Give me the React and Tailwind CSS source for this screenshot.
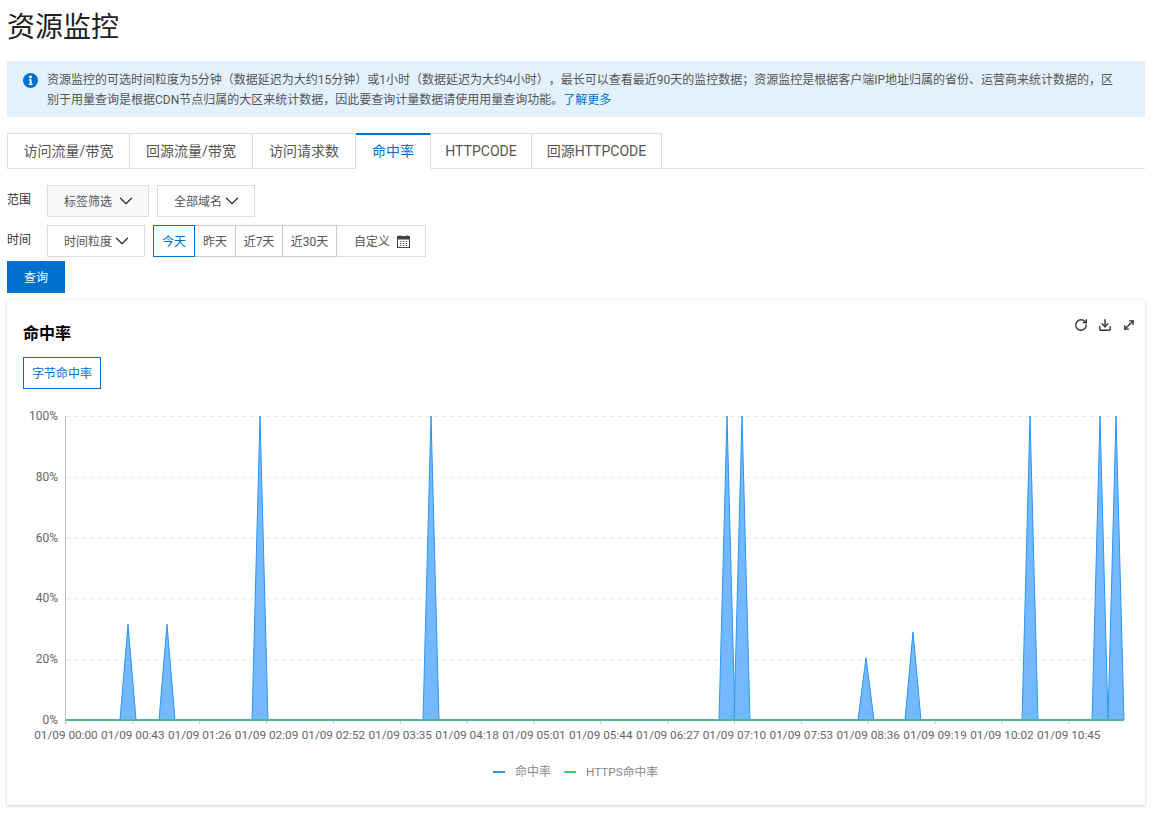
import React from 'react';
import { ChevronDown, RotateCw, Download, MoveDiagonal } from 'lucide-react';

const tabs = ['访问流量/带宽', '回源流量/带宽', '访问请求数', '命中率', 'HTTPCODE', '回源HTTPCODE'];
const tabWidths = ['w-[123px]', 'w-[123px]', 'w-[103px]', 'w-[75px]', 'w-[101px]', 'w-[130px]'];
const ranges = [
  { label: '今天', width: 'w-[42px]' },
  { label: '昨天', width: 'w-[41px]' },
  { label: '近7天', width: 'w-[47px]' },
  { label: '近30天', width: 'w-[54px]' },
];
const xLabels = ['00:00', '00:43', '01:26', '02:09', '02:52', '03:35', '04:18', '05:01', '05:44', '06:27', '07:10', '07:53', '08:36', '09:19', '10:02', '10:45'];
const yLabels = [100, 80, 60, 40, 20, 0];
const peaks = [
  [128, 31.5], [167, 31.5], [260, 100], [431, 100], [727, 100], [742, 100],
  [866, 20.5], [913, 29], [1030, 100], [1100, 100], [1116, 100],
];

function Chart() {
  const top = 16;
  const bottom = 320;
  const yOf = (v) => bottom - (v / 100) * (bottom - top);
  return (
    <svg width="1138" height="400" viewBox="7 400 1138 400" className="block">
      <g transform="translate(0 400)">
        {yLabels.map((v) => (
          <g key={v}>
            {v > 0 && <line x1="66" x2="1124" y1={yOf(v) + 0.5} y2={yOf(v) + 0.5} stroke="#e8e8e8" strokeDasharray="4 4" />}
            <text x="58" y={yOf(v) + 4} textAnchor="end" fontSize="12" fill="#666">{v}%</text>
          </g>
        ))}
        <line x1="65.5" x2="65.5" y1={top} y2={bottom + 4} stroke="#c4c4c4" />
        {xLabels.map((t, i) => {
          const x = 66 + i * 66.85;
          return (
            <g key={t}>
              <line x1={x} x2={x} y1={bottom} y2={bottom + 4} stroke="#c4c4c4" />
              <text x={x} y={bottom + 19} textAnchor="middle" fontSize="11.75" fill="#666">01/09 {t}</text>
            </g>
          );
        })}
        {peaks.map(([x, v]) => (
          <path key={x} d={`M${x - 8} ${bottom}L${x} ${yOf(v)}L${x + 8} ${bottom}Z`} fill="#74b9ff" stroke="#2b95f5" strokeWidth="1" />
        ))}
        <line x1="66" x2="1124" y1={bottom} y2={bottom} stroke="#4fb59b" strokeWidth="2" />
        <line x1="493" x2="505" y1="372" y2="372" stroke="#2b95f5" strokeWidth="2" />
        <text x="515" y="376" fontSize="12" fill="#888">命中率</text>
        <line x1="564" x2="576" y1="372" y2="372" stroke="#3fcf6f" strokeWidth="2" />
        <text x="586" y="376" fontSize="11.75" fill="#888">HTTPS命中率</text>
      </g>
    </svg>
  );
}

function InfoDot() {
  return (
    <svg width="15" height="15" viewBox="0 0 15 15" className="mt-[3px] shrink-0">
      <circle cx="7.5" cy="7.5" r="7.5" fill="#0070cc" />
      <circle cx="7.5" cy="4" r="1.4" fill="#fff" />
      <path d="M6 6.3h2.6v4.6h1v1.2H5.7v-1.2h1V7.5H6z" fill="#fff" />
    </svg>
  );
}

function CalendarIcon() {
  return (
    <svg width="13" height="13" viewBox="0 0 13 13" className="shrink-0">
      <rect x="0.5" y="1.5" width="12" height="11" fill="none" stroke="#444" />
      <rect x="0.5" y="1.5" width="12" height="3" fill="#444" />
      <path d="M3 0v2M10 0v2" stroke="#444" />
      <path d="M3 6.5h1.5M5.8 6.5h1.5M8.6 6.5h1.5M3 8.5h1.5M5.8 8.5h1.5M8.6 8.5h1.5M3 10.5h1.5M5.8 10.5h1.5M8.6 10.5h1.5" stroke="#666" />
    </svg>
  );
}

export default function App() {
  return (
    <div className="w-[1154px] h-[814px] overflow-hidden bg-white pl-[7px] pr-[9px] text-[#333] [text-spacing-trim:space-all]" style={{ fontFamily: 'Roboto, "Noto Sans CJK SC", sans-serif' }}>
      <h1 className="h-[61px] pt-[8px] text-[28px] leading-[40px] font-normal text-[#222]">资源监控</h1>

      <div className="flex h-[56px] bg-[#e3f1fd] pl-[16px] pr-[24px] pt-[9px]">
        <InfoDot />
        <div className="ml-[9px] text-[12px] leading-[20px] text-[#555]">
          <p>资源监控的可选时间粒度为5分钟（数据延迟为大约15分钟）或1小时（数据延迟为大约4小时），最长可以查看最近90天的监控数据；资源监控是根据客户端IP地址归属的省份、运营商来统计数据的，区</p>
          <div className="flex">
            <p>别于用量查询是根据CDN节点归属的大区来统计数据，因此要查询计量数据请使用用量查询功能。</p>
            <a className="text-[#0070cc]">了解更多</a>
          </div>
        </div>
      </div>

      <div className="mt-[16px] flex h-[36px] border-b border-[#ddd]">
        {tabs.map((t, i) => (
          <div
            key={t}
            className={`${tabWidths[i]} flex h-[36px] items-center justify-center border-r border-[#ddd] text-[14px] ${i === 0 ? 'border-l' : ''} ${i === 3 ? 'border-t-2 border-t-[#0070cc] border-b border-b-white bg-white text-[#0070cc]' : 'border-t text-[#555]'}`}
          >
            {t}
          </div>
        ))}
      </div>

      <div className="mt-[16px] flex h-[32px] items-start">
        <span className="w-[40px] pt-[5px] text-[12px] leading-[20px] text-[#333]">范围</span>
        <div className="flex h-[32px] w-[102px] items-center border border-[#ddd] bg-[#f7f7f7] pl-[16px] text-[12px] text-[#555]">
          <span className="pt-[2px]">标签筛选</span>
          <ChevronDown className="ml-[3px] h-[22px] w-[22px] text-[#333]" strokeWidth={1.4} />
        </div>
        <div className="ml-[8px] flex h-[32px] w-[98px] items-center border border-[#ddd] pl-[16px] text-[12px] text-[#555]">
          <span className="pt-[2px]">全部域名</span>
          <ChevronDown className="-ml-[1px] h-[22px] w-[22px] text-[#333]" strokeWidth={1.4} />
        </div>
      </div>

      <div className="mt-[8px] flex h-[32px] items-start">
        <span className="w-[40px] pt-[5px] text-[12px] leading-[20px] text-[#333]">时间</span>
        <div className="flex h-[32px] w-[98px] items-center border border-[#ddd] pl-[16px] text-[12px] text-[#555]">
          <span className="pt-[2px]">时间粒度</span>
          <ChevronDown className="-ml-[1px] h-[22px] w-[22px] text-[#333]" strokeWidth={1.4} />
        </div>
        <div className="ml-[8px] flex">
          {ranges.map((r, i) => (
            <div
              key={r.label}
              className={`${r.width} flex h-[32px] items-center justify-center border pt-[2px] text-[12px] ${i === 0 ? 'border-[#0070cc] text-[#0070cc]' : 'border-l-0 border-[#ccc] text-[#555]'}`}
            >
              {r.label}
            </div>
          ))}
          <div className="flex h-[32px] w-[89px] items-center border border-l-0 border-[#ddd] pl-[17px] text-[12px] text-[#555]">
            <span className="pt-[2px]">自定义</span>
            <span className="ml-[7px]"><CalendarIcon /></span>
          </div>
        </div>
      </div>

      <button className="mt-[4px] block h-[32px] w-[58px] bg-[#0070cc] pt-[2px] text-[12px] text-white">查询</button>

      <div className="mt-[7px] h-[505px] w-[1138px] overflow-hidden bg-white shadow-[0_1px_3px_rgba(0,0,0,0.22)]">
        <div className="flex h-[57px] items-start justify-between pl-[16px] pr-[9px] pt-[21px]">
          <h2 className="text-[16px] leading-[26px] font-bold text-black">命中率</h2>
          <div className="-mt-[3px] flex gap-[10px] text-[#333]">
            <RotateCw className="h-[14px] w-[14px]" strokeWidth={2.4} />
            <Download className="h-[14px] w-[14px]" strokeWidth={2.4} />
            <MoveDiagonal className="h-[14px] w-[14px]" strokeWidth={2.4} />
          </div>
        </div>
        <div className="ml-[16px] flex h-[32px] w-[78px] items-center justify-center border border-[#0070cc] pt-[2px] text-[12px] text-[#0070cc]">字节命中率</div>
        <div className="mt-[11px]">
          <Chart />
        </div>
      </div>
    </div>
  );
}
